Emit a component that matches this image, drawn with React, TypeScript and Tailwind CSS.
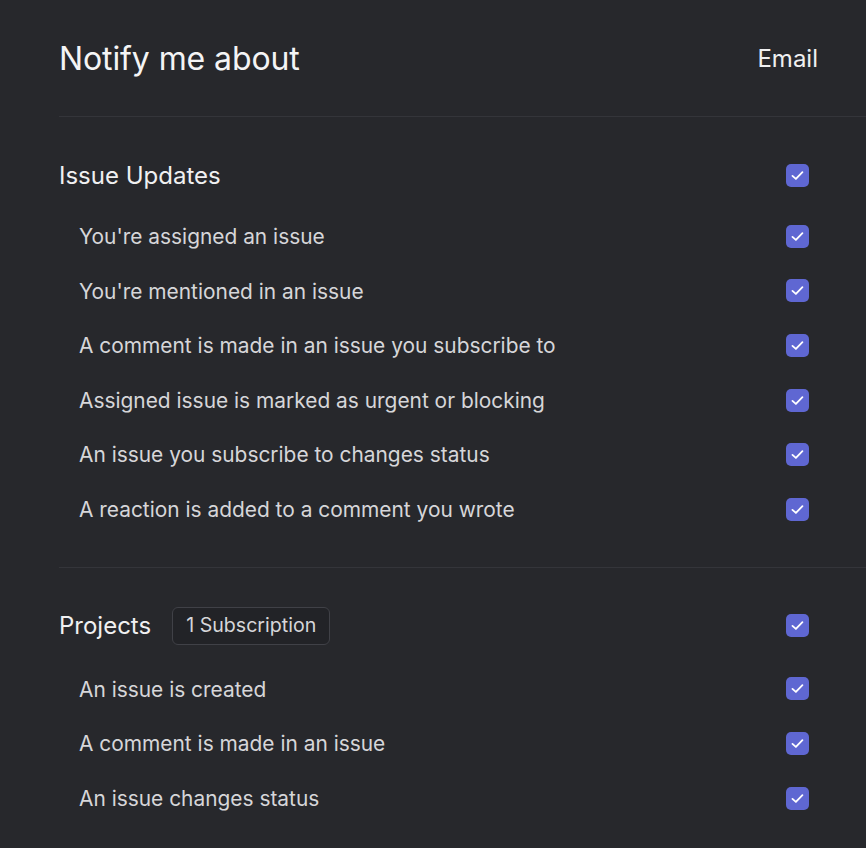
import React from "react";

const Check = () => (
  <div className="w-[23px] h-[23px] rounded-[5px] bg-[#5f67d2] flex items-center justify-center">
    <svg width="15" height="15" viewBox="0 0 14 14" fill="none">
      <path d="M2.3 7.4 L5.5 10.2 L11.6 3.9" stroke="white" strokeWidth="1.7" strokeLinecap="round" strokeLinejoin="round" />
    </svg>
  </div>
);

const Row = ({ label }: { label: string }) => (
  <div className="h-[54.6px] flex items-center justify-between pl-[20px] pr-[57px]">
    <span className="text-[20.9px] text-[#d6d6d9] pt-[1px]">{label}</span>
    <Check />
  </div>
);

const issueRows = [
  "You're assigned an issue",
  "You're mentioned in an issue",
  "A comment is made in an issue you subscribe to",
  "Assigned issue is marked as urgent or blocking",
  "An issue you subscribe to changes status",
  "A reaction is added to a comment you wrote",
];

const projectRows = ["An issue is created", "A comment is made in an issue", "An issue changes status"];

export default function App() {
  return (
    <div className="w-[866px] h-[848px] bg-[#27282c] overflow-hidden pl-[59px]" style={{ fontFamily: "Inter, 'Noto Sans', sans-serif" }}>
      <div className="h-[117px] flex items-center justify-between pr-[48px] border-b border-[#34353a]">
        <span className="text-[32px] text-[#f4f4f5] tracking-[-0.1px] pt-[1px]">Notify me about</span>
        <span className="text-[24px] text-[#f0f0f1] pt-[1px]">Email</span>
      </div>
      <div className="pt-[30px] pb-[30px] border-b border-[#34353a]">
        <div className="h-[56px] flex items-center justify-between pr-[57px]">
          <span className="text-[24px] text-[#f0f0f1] pt-[1px]">Issue Updates</span>
          <Check />
        </div>
        <div className="mt-[6px]">
          {issueRows.map((r) => (
            <Row key={r} label={r} />
          ))}
        </div>
      </div>
      <div className="pt-[30px]">
        <div className="h-[56px] flex items-center justify-between pr-[57px]">
          <div className="flex items-center gap-[21px]">
            <span className="text-[24px] text-[#f0f0f1] pt-[1px]">Projects</span>
            <span className="h-[38px] px-[13px] flex items-center rounded-[6px] border border-[#404147] bg-[#222327] text-[19.6px] text-[#d6d6d9] pt-[1px]">
              1 Subscription
            </span>
          </div>
          <Check />
        </div>
        <div className="mt-[8px]">
          {projectRows.map((r) => (
            <Row key={r} label={r} />
          ))}
        </div>
      </div>
    </div>
  );
}
